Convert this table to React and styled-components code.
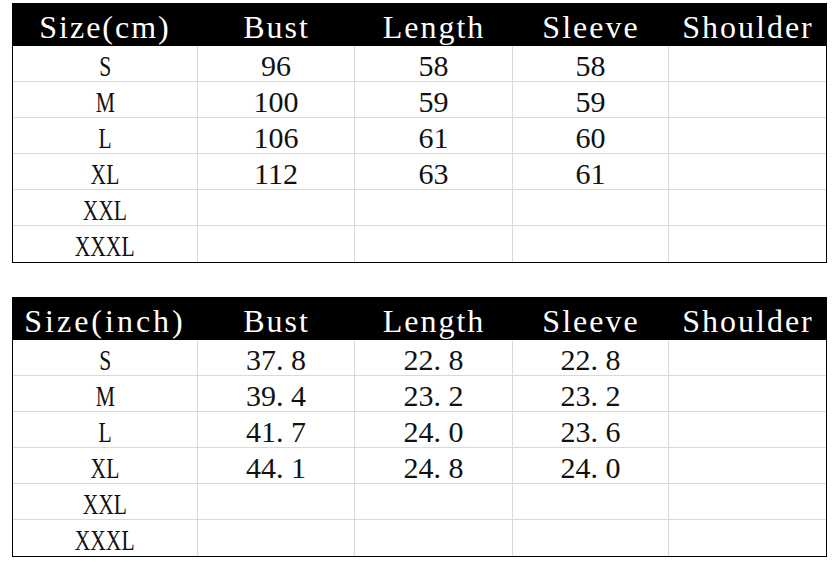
import styled, { createGlobalStyle } from "styled-components";

const GlobalStyle = createGlobalStyle`
  html, body {
    margin: 0;
    padding: 0;
    background: #fff;
  }
  body {
    padding: 3px 12px;
  }
`;

const Page = styled.div`
  display: flex;
  flex-direction: column;
  gap: 34px;
`;

const Sheet = styled.div`
  display: grid;
  grid-template-columns: 185px 157px 158px 156px 157px;
  width: 815px;
  box-sizing: border-box;
  border: 1px solid #000;
  border-top: none;
`;

const HeadCell = styled.div`
  height: 43px;
  background: #000;
  color: #fff;
  display: flex;
  align-items: center;
  justify-content: center;
  margin-left: ${(p) => (p.$first ? "-1px" : "0")};
  margin-right: ${(p) => (p.$last ? "-1px" : "0")};
`;

const HeadText = styled.span`
  display: inline-block;
  font-family: "Liberation Serif", "Times New Roman", serif;
  font-size: 32px;
  letter-spacing: ${(p) => (p.$wide ? "3px" : "2px")};
  line-height: 1;
  padding-top: 5px;
  white-space: nowrap;
`;

const Cell = styled.div`
  height: 36px;
  box-sizing: border-box;
  border-right: ${(p) => (p.$last ? "none" : "1px solid #d9d9d9")};
  border-bottom: ${(p) => (p.$bottom ? "none" : "1px solid #d9d9d9")};
  display: flex;
  align-items: center;
  justify-content: center;
  color: #111;
`;

const CellText = styled.span`
  display: inline-block;
  font-family: "Liberation Serif", "Times New Roman", serif;
  font-size: 30px;
  line-height: 1;
  padding-top: 4px;
  white-space: pre;
  transform: ${(p) => (p.$condensed ? "scaleX(0.72)" : "none")};
`;

const sizes = ["S", "M", "L", "XL", "XXL", "XXXL"];

const cmRows = [
  ["96", "58", "58", ""],
  ["100", "59", "59", ""],
  ["106", "61", "60", ""],
  ["112", "63", "61", ""],
  ["", "", "", ""],
  ["", "", "", ""],
];

const inchRows = [
  ["37. 8", "22. 8", "22. 8", ""],
  ["39. 4", "23. 2", "23. 2", ""],
  ["41. 7", "24. 0", "23. 6", ""],
  ["44. 1", "24. 8", "24. 0", ""],
  ["", "", "", ""],
  ["", "", "", ""],
];

const SizeTable = ({ unit, rows }) => {
  const heads = [`Size(${unit})`, "Bust", "Length", "Sleeve", "Shoulder"];
  return (
    <Sheet>
      {heads.map((h, i) => (
        <HeadCell key={h} $first={i === 0} $last={i === heads.length - 1}>
          <HeadText $wide={i === 0 && unit === "inch"}>{h}</HeadText>
        </HeadCell>
      ))}
      {rows.map((row, r) => {
        const bottom = r === rows.length - 1;
        return [sizes[r], ...row].map((v, c) => (
          <Cell key={`${r}-${c}`} $last={c === 4} $bottom={bottom}>
            <CellText $condensed={c === 0}>{v}</CellText>
          </Cell>
        ));
      })}
    </Sheet>
  );
};

export default function App() {
  return (
    <>
      <GlobalStyle />
      <Page>
        <SizeTable unit="cm" rows={cmRows} />
        <SizeTable unit="inch" rows={inchRows} />
      </Page>
    </>
  );
}
